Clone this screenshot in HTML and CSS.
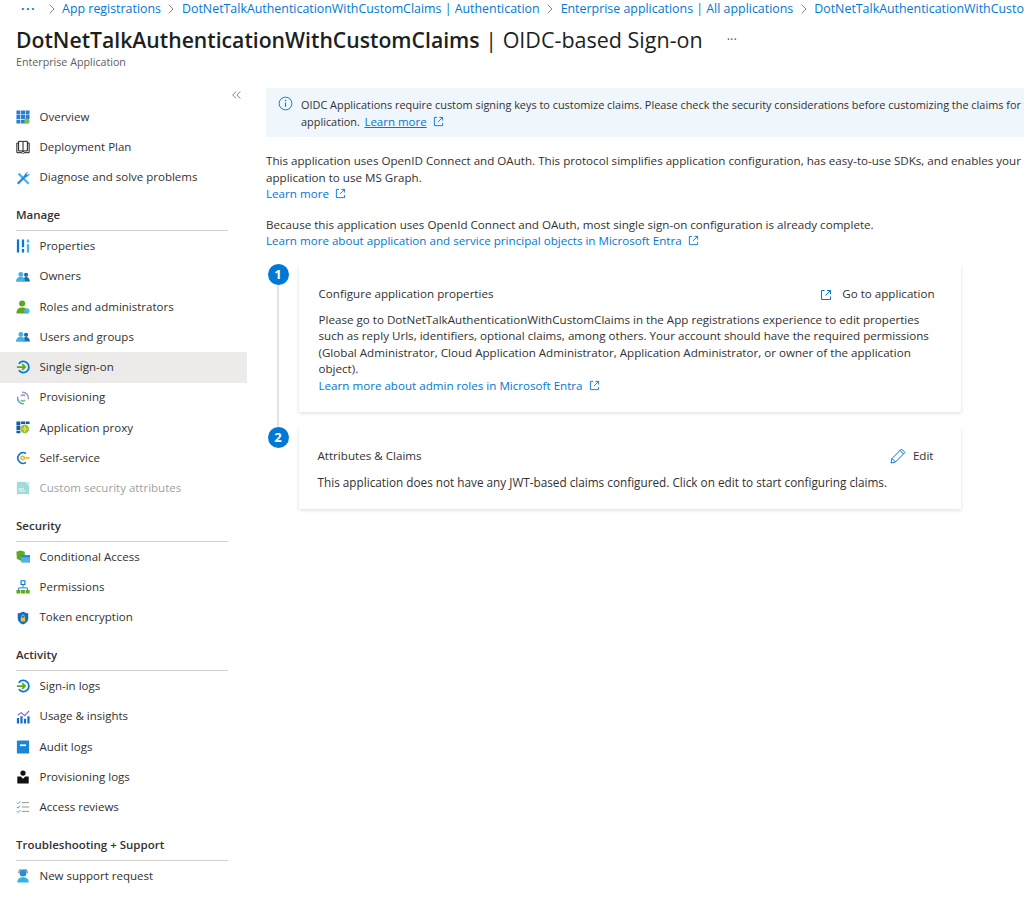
FILE: index.html
```html
<!DOCTYPE html>
<html lang="en">
<head>
  <meta charset="UTF-8">
  <meta name="viewport" content="width=device-width, initial-scale=1.0">
  <title>OIDC-based Sign-on</title>
  <link rel="stylesheet" href="styles.css">
</head>
<body>
  <svg class="defs" width="0" height="0">
    <symbol id="i-ext" viewBox="0 0 12 12">
      <path d="M4.500 1.500H1.500v9h9V7.500M7 1.500h3.500V5M10.500 1.500L5.500 6.500" fill="none" stroke="currentColor" stroke-width="1"/>
    </symbol>
    <symbol id="i-chev" viewBox="0 0 6 10">
      <path d="M.7 .7L5 5 .7 9.300" fill="none" stroke="#8a8886" stroke-width="1"/>
    </symbol>
    <symbol id="i-sso" viewBox="0 0 16 16">
      <path d="M3.200 4.200A6.400 6.400 0 1 1 3.200 11.800" fill="none" stroke="#0078d4" stroke-width="2"/>
      <path d="M1 8h9M7 4.800L10.400 8 7 11.200" fill="none" stroke="#5ea81e" stroke-width="2"/>
    </symbol>
    <symbol id="i-users" viewBox="0 0 16 16">
      <circle cx="11.500" cy="5.500" r="2.400" fill="#1b6ca8"/>
      <path d="M8 13c0-3.500 1.400-5 3.500-5s4 1.500 4.500 5z" fill="#1b6ca8"/>
      <circle cx="5.500" cy="5" r="2.800" fill="#45b0e6"/>
      <path d="M0 13.500c0-4 2.500-5.800 5.500-5.800s5 1.800 5 5.800z" fill="#45b0e6"/>
    </symbol>
  </svg>

  <header class="page-head">
    <nav class="crumbs">
      <span class="crumb-more">···</span>
      <svg class="chev"><use href="#i-chev"/></svg><a>App registrations</a>
      <svg class="chev"><use href="#i-chev"/></svg><a>DotNetTalkAuthenticationWithCustomClaims | Authentication</a>
      <svg class="chev"><use href="#i-chev"/></svg><a>Enterprise applications | All applications</a>
      <svg class="chev"><use href="#i-chev"/></svg><a>DotNetTalkAuthenticationWithCustomClaims</a>
    </nav>
    <div class="title-row">
      <h1><strong>DotNetTalkAuthenticationWithCustomClaims</strong> | OIDC-based Sign-on</h1>
      <span class="title-more">···</span>
    </div>
    <div class="subtitle">Enterprise Application</div>
  </header>

  <div class="layout">
    <aside class="sidebar">
      <div class="collapse-row">
        <svg width="9" height="8" viewBox="0 0 9 8"><path d="M4 .5L.7 4 4 7.500M8.300 .5L5 4l3.300 3.500" fill="none" stroke="#8a8886" stroke-width="1"/></svg>
      </div>

      <ul class="menu">
        <li class="item">
          <svg class="icon" viewBox="0 0 16 16">
            <path d="M.5 .5h4.500v4.500H.5zM5.800 .5h4.500v4.500H5.800zM11 .5h4.500v4.500H11zM.5 5.800h4.500v4.500H.5zM5.800 5.800h4.500v4.500H5.800zM11 5.800h4.500v4.500H11zM.5 11h4.500v4.500H.5zM5.800 11h4.500v4.500H5.800z" fill="#2b7cd3"/>
            <circle cx="12.500" cy="12.800" r="3" fill="#7fbf3a"/>
          </svg>
          Overview
        </li>
        <li class="item">
          <svg class="icon" viewBox="0 0 16 16">
            <path d="M3 1.500h4.500l.5 1 .5-1H13v11H8.500l-.5 1-.5-1H3z" fill="none" stroke="#111" stroke-width="1.100"/>
            <path d="M3 3.500H1V14.500h6l1 1 1-1h6V3.500h-2M8 2.500v11" fill="none" stroke="#111" stroke-width="1.100"/>
          </svg>
          Deployment Plan
        </li>
        <li class="item">
          <svg class="icon" viewBox="0 0 16 16">
            <path d="M14.500 14.500L3 3" stroke="#50b0e6" stroke-width="2.600"/>
            <path d="M2 14.500L11.500 5" stroke="#2b88d8" stroke-width="2.600"/>
            <path d="M9.500 4.500l3-3.500 1 .5-1.500 2 1 1 2-1.500.5 1-3.500 3z" fill="#2b88d8"/>
          </svg>
          Diagnose and solve problems
        </li>
      </ul>

      <h2 class="group">Manage</h2>
      <ul class="menu">
        <li class="item">
          <svg class="icon" viewBox="0 0 16 16">
            <path d="M1 .5h2.600v15H1z" fill="#0078d4"/>
            <path d="M6.700 .5h2.600v9H6.700zM6.700 11.500h2.600v4H6.700z" fill="#0078d4"/>
            <path d="M12.400 .5H15v3.500h-2.600zM12.400 6H15v9.500h-2.600z" fill="#45b0e6"/>
          </svg>
          Properties
        </li>
        <li class="item"><svg class="icon"><use href="#i-users"/></svg>Owners</li>
        <li class="item">
          <svg class="icon" viewBox="0 0 16 16">
            <circle cx="7" cy="4" r="3.500" fill="#5ea81e"/>
            <path d="M.5 15.500c0-5 2.500-7 6.500-7s6.500 2 6.500 7z" fill="#5ea81e"/>
            <circle cx="12.500" cy="12.500" r="3" fill="#50b8e8"/>
          </svg>
          Roles and administrators
        </li>
        <li class="item"><svg class="icon"><use href="#i-users"/></svg>Users and groups</li>
        <li class="item active"><svg class="icon"><use href="#i-sso"/></svg>Single sign-on</li>
        <li class="item">
          <svg class="icon" viewBox="0 0 16 16">
            <path d="M7 1.500A6.500 6.500 0 0 1 14 9.500" fill="none" stroke="#a58fd0" stroke-width="1.700"/>
            <path d="M9 14.500A6.500 6.500 0 0 1 2 6.500" fill="none" stroke="#50a8e0" stroke-width="1.700"/>
            <path d="M5.500 10.500c1.500 1 3.500 1 5 0" fill="none" stroke="#7fba5a" stroke-width="1.600"/>
            <path d="M5.500 5.500c1.500-1 3.500-1 5 0" fill="none" stroke="#a58fd0" stroke-width="1.600"/>
          </svg>
          Provisioning
        </li>
        <li class="item">
          <svg class="icon" viewBox="0 0 16 16">
            <path d="M.5 .5h4.500v4.500H.5zM5.800 .5h4.500v3H5.800zM11 .5h4.500v3H11zM.5 5.800h4.500v4.500H.5zM.5 11h4.500v3H.5z" fill="#0f5ca8"/>
            <circle cx="10" cy="9" r="5" fill="#8cc63f"/>
            <path d="M10 5.500v7M6.500 9h7" stroke="#f5d547" stroke-width="1.500"/>
          </svg>
          Application proxy
        </li>
        <li class="item">
          <svg class="icon" viewBox="0 0 16 16">
            <path d="M11.500 3A6 6 0 1 0 11.500 13" fill="none" stroke="#0078d4" stroke-width="1.800"/>
            <circle cx="7.500" cy="8" r="2" fill="none" stroke="#f2b01e" stroke-width="1.600"/>
            <path d="M9.500 8h6" stroke="#f2b01e" stroke-width="1.800"/>
          </svg>
          Self-service
        </li>
        <li class="item disabled">
          <svg class="icon" viewBox="0 0 16 16">
            <path d="M1 1h14v14H1z" fill="#9fdcd4"/>
            <path d="M3 9h6M3 11.500h8" stroke="#e6f6f3" stroke-width="1.200"/>
            <path d="M10 1l5 5V1z" fill="#c9ece7"/>
          </svg>
          Custom security attributes
        </li>
      </ul>

      <h2 class="group">Security</h2>
      <ul class="menu">
        <li class="item">
          <svg class="icon" viewBox="0 0 16 16">
            <path d="M.5 2L5 .5 10 2v9L6 12.500 1 10z" fill="#5ea81e"/>
            <path d="M6 6h10v8.500H6z" fill="#56b0e6"/>
            <path d="M6 6h10v2.200H6z" fill="#1a86d8"/>
          </svg>
          Conditional Access
        </li>
        <li class="item">
          <svg class="icon" viewBox="0 0 16 16">
            <path d="M8 5v4M3 12V9h10v3" fill="none" stroke="#0078d4" stroke-width="1"/>
            <path d="M5.800 .8h4.400v4.400H5.800z" fill="#fff" stroke="#0078d4" stroke-width="1.300"/>
            <path d="M.5 11.500h4.500v4H.5zM5.800 11.500h4.400v4H5.800zM11 11.500h4.500v4H11z" fill="#5ea81e"/>
          </svg>
          Permissions
        </li>
        <li class="item">
          <svg class="icon" viewBox="0 0 16 16">
            <path d="M8 .5c2 1.500 4 2 6 2v6c0 3-2.500 5.500-6 7-3.500-1.500-6-4-6-7v-6c2 0 4-.5 6-2z" fill="#0f6cc8"/>
            <path d="M5.500 7.500h5v4.500h-5z" fill="#f2c230"/>
            <path d="M6.500 7.500V6a1.500 1.500 0 0 1 3 0v1.500" fill="none" stroke="#f2c230" stroke-width="1"/>
          </svg>
          Token encryption
        </li>
      </ul>

      <h2 class="group">Activity</h2>
      <ul class="menu">
        <li class="item"><svg class="icon"><use href="#i-sso"/></svg>Sign-in logs</li>
        <li class="item">
          <svg class="icon" viewBox="0 0 16 16">
            <path d="M1 9h2.500v6.500H1zM5 7h2.500v8.500H5zM9 10h2.500v5.500H9zM13 7h2.500v8.500H13z" fill="#0f6cc8"/>
            <path d="M2 6L6 3l4 3.500L15 1" fill="none" stroke="#8661c5" stroke-width="1.300"/>
          </svg>
          Usage &amp; insights
        </li>
        <li class="item">
          <svg class="icon" viewBox="0 0 16 16">
            <path d="M1 1.500a1 1 0 0 1 1-1h13v15H2a1 1 0 0 1-1-1z" fill="#1a86d8"/>
            <path d="M4.500 5h7v2h-7z" fill="#fff"/>
          </svg>
          Audit logs
        </li>
        <li class="item">
          <svg class="icon" viewBox="0 0 16 16">
            <circle cx="8" cy="3.500" r="3" fill="#111"/>
            <path d="M1.500 7.500h4L8 10l2.500-2.500h4V15.500h-13z" fill="#111"/>
          </svg>
          Provisioning logs
        </li>
        <li class="item">
          <svg class="icon" viewBox="0 0 16 16">
            <path d="M1 3l1.300 1.300L4.800 1.500M1 8l1.300 1.300 2.500-2.800M1 13l1.300 1.300 2.500-2.800" fill="none" stroke="#2f8fe0" stroke-width="1"/>
            <path d="M6.500 3H15M6.500 8H15M6.500 13H15" stroke="#8a8886" stroke-width="1"/>
          </svg>
          Access reviews
        </li>
      </ul>

      <h2 class="group">Troubleshooting + Support</h2>
      <ul class="menu">
        <li class="item">
          <svg class="icon" viewBox="0 0 16 16">
            <circle cx="8" cy="4.500" r="4" fill="#1f8fd8"/>
            <path d="M1.500 15.500c0-4 2.500-6 6.500-6s6.500 2 6.500 6z" fill="#2fb4e6"/>
            <path d="M3 4.500a5 5 0 0 1 10 0" fill="none" stroke="#7a7a7a" stroke-width="1.200"/>
          </svg>
          New support request
        </li>
      </ul>
    </aside>

    <main class="content">
      <div class="banner">
        <svg class="banner-icon" viewBox="0 0 16 16">
          <circle cx="8" cy="8" r="6.800" fill="none" stroke="#0078d4" stroke-width="1"/>
          <path d="M8 7v4.500" stroke="#0078d4" stroke-width="1.200"/>
          <circle cx="8" cy="4.800" r=".8" fill="#0078d4"/>
        </svg>
        <p>OIDC Applications require custom signing keys to customize claims. Please check the security considerations before customizing the claims for the<br>application.<a class="underlined">Learn more</a> <svg class="ext"><use href="#i-ext"/></svg></p>
      </div>

      <p class="para">This application uses OpenID Connect and OAuth. This protocol simplifies application configuration, has easy-to-use SDKs, and enables your users<br>application to use MS Graph.<br><a>Learn more</a> <svg class="ext"><use href="#i-ext"/></svg></p>

      <p class="para">Because this application uses OpenId Connect and OAuth, most single sign-on configuration is already complete.<br><a>Learn more about application and service principal objects in Microsoft Entra</a> <svg class="ext"><use href="#i-ext"/></svg></p>

      <section class="step first">
        <div class="rail">
          <span class="num">1</span>
          <span class="rail-line"></span>
        </div>
        <div class="card">
          <div class="card-head">
            <span>Configure application properties</span>
            <span class="action"><svg class="ext action-ext"><use href="#i-ext"/></svg>Go to application</span>
          </div>
          <p>Please go to DotNetTalkAuthenticationWithCustomClaims in the App registrations experience to edit properties<br>such as reply Urls, identifiers, optional claims, among others. Your account should have the required permissions<br>(Global Administrator, Cloud Application Administrator, Application Administrator, or owner of the application<br>object).<br><a>Learn more about admin roles in Microsoft Entra</a> <svg class="ext"><use href="#i-ext"/></svg></p>
        </div>
      </section>

      <section class="step">
        <div class="rail">
          <span class="num">2</span>
        </div>
        <div class="card small">
          <div class="card-head">
            <span>Attributes &amp; Claims</span>
            <span class="action">
              <svg class="pencil" viewBox="0 0 16 16"><path d="M1 15l1-4.500L11.500 1l3.500 3.500L5.500 14zM2 10.500L5.500 14M10 2.500l3.500 3.500" fill="none" stroke="#0078d4" stroke-width="1"/></svg>Edit
            </span>
          </div>
          <p>This application does not have any JWT-based claims configured. Click on edit to start configuring claims.</p>
        </div>
      </section>
    </main>
  </div>
</body>
</html>
```

FILE: styles.css
```css
* { box-sizing: border-box; }
html, body { height: 100%; }
body { margin: 0; width: 1024px; height: 910px; overflow: hidden; background: #fff; color: #323130; font-family: "Open Sans", "Noto Sans", Arial, sans-serif; font-size: 11.500px; line-height: 16.500px; }
a { color: #0078d4; text-decoration: none; }
p { margin: 0; }
.defs { position: absolute; }

.page-head { height: 80px; padding-left: 16px; }
.crumbs { height: 18px; padding-left: 5px; display: flex; align-items: center; white-space: nowrap; overflow: hidden; font-size: 12.400px; }
.chev { width: 6px; height: 10px; margin: 0 7.500px; flex: none; }
.crumb-more { color: #0078d4; font-weight: 700; letter-spacing: 1.500px; margin-right: 5px; }
.title-row { display: flex; align-items: center; height: 29px; margin-top: 7px; white-space: nowrap; }
h1 { margin: 0; font-size: 21.500px; font-weight: 400; line-height: 28px; color: #201f1e; }
h1 strong { font-weight: 600; font-size: 21.200px; }
.title-more { margin-left: 24px; color: #605e5c; font-size: 13px; }
.subtitle { font-size: 10.700px; color: #605e5c; }

.layout { display: flex; }
.sidebar { width: 247px; flex: none; }
.collapse-row { height: 22px; padding: 11px 6px 0 0; display: flex; justify-content: flex-end; align-items: flex-start; }
.menu { list-style: none; margin: 0; padding: 0; }
.item { display: flex; align-items: center; height: 30.250px; padding-left: 16px; gap: 9.500px; white-space: nowrap; }
.item.active { background: #edebe9; }
.item.disabled { color: #a19f9d; }
.icon { width: 14px; height: 14px; flex: none; }
.group { margin: 14px 19px 0 16px; height: 24.500px; border-bottom: 1px solid #d2d0ce; font-size: 11.500px; font-weight: 600; line-height: 16px; color: #323130; }

.content { flex: none; width: 900px; padding: 8px 0 0 19px; white-space: nowrap; font-size: 11.620px; }
.banner { display: flex; height: 49px; padding: 8px 0 0 12px; gap: 8px; background: #eff6fc; font-size: 10.900px; line-height: 17px; }
.banner-icon { width: 15px; height: 15px; flex: none; }
.underlined { text-decoration: underline; margin-left: 4.500px; font-size: 11.500px; }
.ext { width: 11px; height: 11px; margin-left: 3px; vertical-align: -1px; color: #0078d4; }
.para { margin-top: 16px; }
.para + .para { margin-top: 14px; }

.step { display: flex; gap: 9.500px; width: 695px; }
.step.first { margin-top: 14px; padding-bottom: 15px; }
.rail { width: 22px; margin-left: 1px; display: flex; flex-direction: column; align-items: center; flex: none; }
.step.first .rail { margin-bottom: -15px; }
.num { width: 21px; height: 21px; border-radius: 50%; background: #0078d4; color: #fff; font-weight: 700; font-size: 13px; line-height: 21px; text-align: center; flex: none; }
.rail-line { flex: 1; width: 2px; background: #e6e4e2; }
.card { width: 662px; padding: 23px 26px 18px 20px; background: #fff; box-shadow: 0 1.600px 3.600px rgba(0,0,0,.13), 0 .3px .9px rgba(0,0,0,.1); }
.card.small { height: 82px; padding: 21px 27px 0 19px; }
.card.small p { font-size: 11.750px; }
.card-head { display: flex; justify-content: space-between; align-items: center; height: 16px; margin-bottom: 9px; }
.card.small .card-head { margin-bottom: 10px; }
.action { display: flex; align-items: center; }
.action-ext { width: 12px; height: 12px; margin: 0 10px 0 0; color: #0078d4; vertical-align: 0; }
.pencil { width: 16px; height: 16px; margin-right: 7px; }
```
